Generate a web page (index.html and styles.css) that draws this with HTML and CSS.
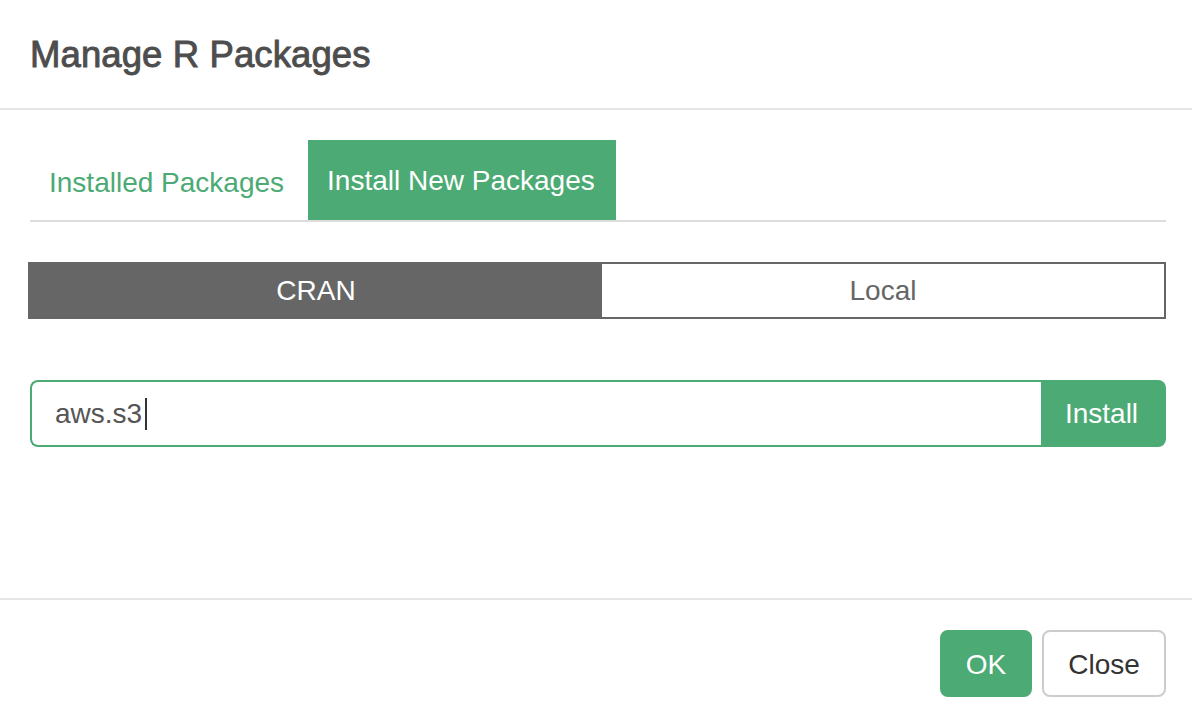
FILE: index.html
```html
<!DOCTYPE html>
<html>
<head>
<meta charset="utf-8">
<title>Manage R Packages</title>
<link rel="stylesheet" href="styles.css">
</head>
<body>
<div class="modal">
  <div class="modal-header">
    <h4 class="modal-title">Manage R Packages</h4>
  </div>
  <div class="modal-body">
    <ul class="tabs">
      <li class="tab">Installed Packages</li>
      <li class="tab active">Install New Packages</li>
    </ul>
    <div class="segmented">
      <div class="seg seg-on">CRAN</div>
      <div class="seg seg-off">Local</div>
    </div>
    <div class="input-group">
      <div class="input"><span class="value">aws.s3</span><span class="caret"></span></div>
      <button class="btn-install">Install</button>
    </div>
  </div>
  <div class="modal-footer">
    <button class="btn btn-ok">OK</button>
    <button class="btn btn-close">Close</button>
  </div>
</div>
</body>
</html>
```
FILE: styles.css
```css
* { box-sizing: border-box; }
html, body {
  margin: 0;
  padding: 0;
  background: #ffffff;
}
body {
  font-family: "Liberation Sans", Arial, sans-serif;
  width: 1192px;
  height: 728px;
  overflow: hidden;
}
.modal {
  height: 728px;
  display: flex;
  flex-direction: column;
  background: #fff;
}
.modal-header {
  height: 110px;
  border-bottom: 2px solid #e5e5e5;
  display: flex;
  align-items: center;
  padding: 2px 30px 0 30px;
}
.modal-title {
  margin: 0;
  font-size: 36.5px;
  font-weight: normal;
  -webkit-text-stroke: 0.9px #4d4d4d;
  color: #4d4d4d;
  letter-spacing: 0.1px;
}
.modal-body {
  flex: 1;
  padding: 30px 26px 0 30px;
}
.tabs {
  list-style: none;
  margin: 0;
  padding: 0;
  display: flex;
  border-bottom: 2px solid #dddddd;
  height: 82px;
}
.tab {
  height: 80px;
  padding: 5px 20px 0 19px;
  margin-right: 4px;
  display: flex;
  align-items: center;
  font-size: 28px;
  color: #4caa74;
}
.tab.active {
  background: #4caa74;
  color: #ffffff;
  padding: 2px 21px 0 19px;
  height: 80px;
}
.segmented {
  margin-top: 40px;
  margin-left: -2px;
  display: flex;
  height: 57px;
  border: 2px solid #666666;
}
.seg {
  flex: 1;
  display: flex;
  align-items: center;
  justify-content: center;
  font-size: 28px;
}
.seg-on {
  background: #666666;
  color: #ffffff;
  flex: 0 0 572px;
}
.seg-off {
  background: #ffffff;
  color: #666666;
}
.input-group {
  margin-top: 61px;
  display: flex;
  height: 67px;
}
.input {
  flex: 1;
  border: 2px solid #4caa74;
  border-right: none;
  border-radius: 8px 0 0 8px;
  display: flex;
  align-items: center;
  padding-left: 23px;
  font-size: 28px;
  color: #555555;
}
.caret {
  display: inline-block;
  width: 2px;
  height: 32px;
  background: #333333;
  margin-left: 3px;
}
.btn-install {
  width: 125px;
  border: none;
  background: #4caa74;
  color: #ffffff;
  font-family: "Liberation Sans", Arial, sans-serif;
  font-size: 28px;
  border-radius: 0 8px 8px 0;
  padding: 0 4px 0 0;
}
.modal-footer {
  border-top: 2px solid #e5e5e5;
  padding: 30px 26px 31px 30px;
  display: flex;
  justify-content: flex-end;
  gap: 10px;
}
.btn {
  height: 67px;
  font-family: "Liberation Sans", Arial, sans-serif;
  font-size: 28px;
  border-radius: 8px;
  padding: 2px 0 0 0;
}
.btn-ok {
  width: 92px;
  background: #4caa74;
  color: #ffffff;
  border: 2px solid #4caa74;
}
.btn-close {
  width: 124px;
  background: #ffffff;
  color: #333333;
  border: 2px solid #cccccc;
}
```
